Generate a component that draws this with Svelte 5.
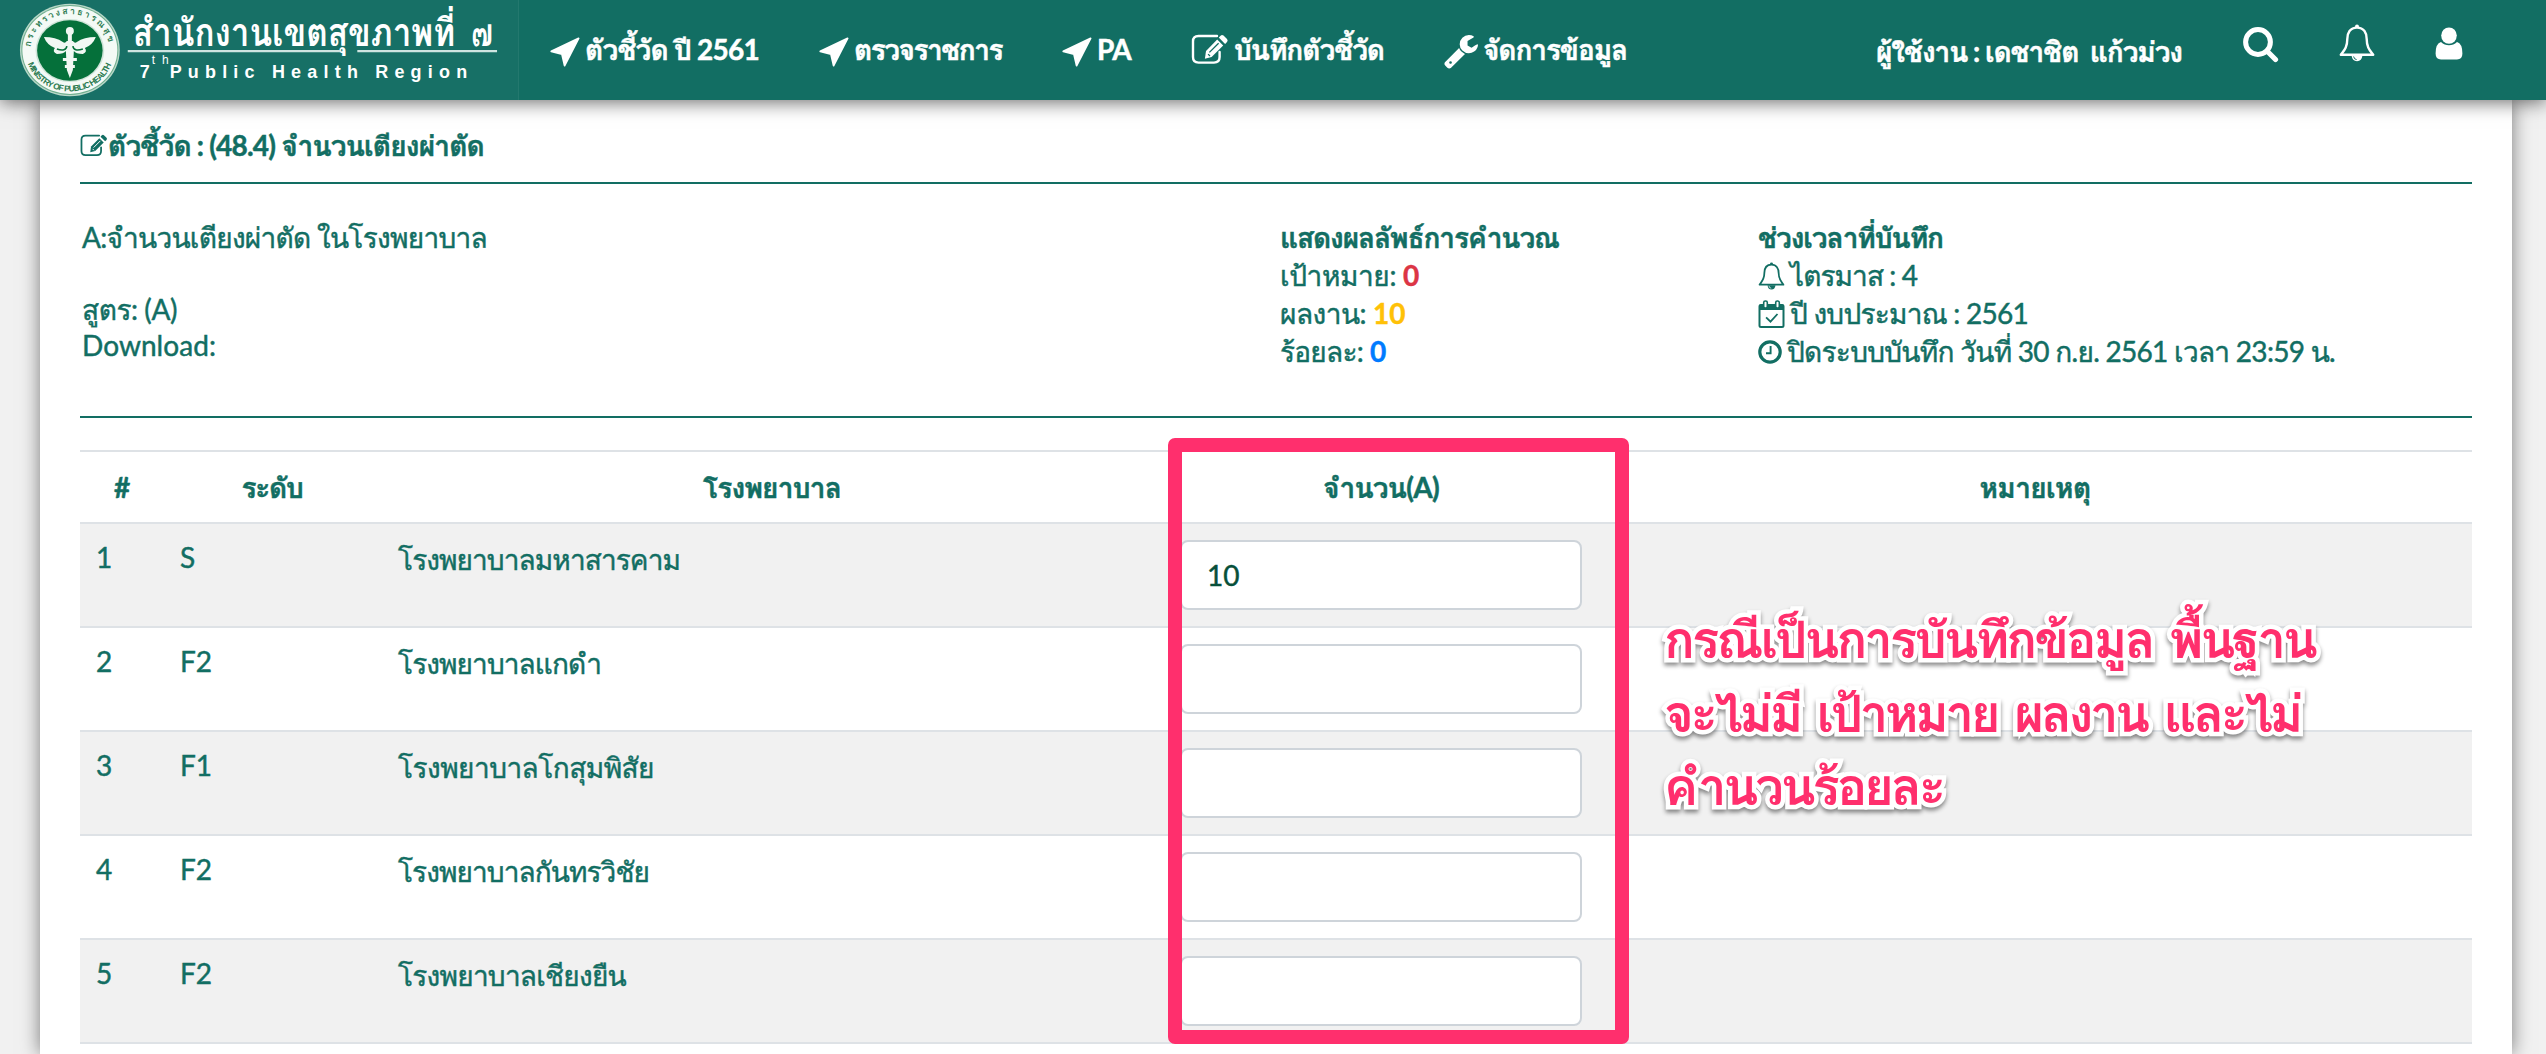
<script>
  const menu = [
    { icon: 'arrow', label: 'ตัวชี้วัด ปี 2561', w: 174 },
    { icon: 'arrow', label: 'ตรวจราชการ', w: 148 },
    { icon: 'arrow', label: 'PA', w: 34 },
    { icon: 'edit', label: 'บันทึกตัวชี้วัด', w: 150 },
    { icon: 'wrench', label: 'จัดการข้อมูล', w: 144 },
  ];

  const results = [
    { label: 'เป้าหมาย:', w: 116, value: '0', tone: 'danger' },
    { label: 'ผลงาน:', w: 86, value: '10', tone: 'warning' },
    { label: 'ร้อยละ:', w: 83, value: '0', tone: 'primary' },
  ];

  const period = [
    { icon: 'bell', label: 'ไตรมาส : 4', w: 127 },
    { icon: 'calendar', label: 'ปี งบประมาณ : 2561', w: 238 },
    { icon: 'clock', label: 'ปิดระบบบันทึก วันที่ 30 ก.ย. 2561 เวลา 23:59 น.', w: 548 },
  ];

  const rows = [
    { level: 'S', name: 'โรงพยาบาลมหาสารคาม', w: 282, value: '10' },
    { level: 'F2', name: 'โรงพยาบาลแกดำ', w: 203, value: '' },
    { level: 'F1', name: 'โรงพยาบาลโกสุมพิสัย', w: 256, value: '' },
    { level: 'F2', name: 'โรงพยาบาลกันทรวิชัย', w: 251, value: '' },
    { level: 'F2', name: 'โรงพยาบาลเชียงยืน', w: 228, value: '' },
  ];

  const note = [
    { text: 'กรณีเป็นการบันทึกข้อมูล พื้นฐาน', w: 651 },
    { text: 'จะไม่มี เป้าหมาย ผลงาน และไม่', w: 636 },
    { text: 'คำนวนร้อยละ', w: 279 },
  ];

  // Tracks the text so that it fills the given width.
  function fit(node, width) {
    node.style.letterSpacing = '0px';
    const base = node.getBoundingClientRect().width;
    node.style.letterSpacing = '1px';
    const step = node.getBoundingClientRect().width - base;
    node.style.letterSpacing = step > 0 ? `${(width - base) / step}px` : '0px';
  }
</script>

{#snippet icon(name)}
  {#if name === 'arrow'}
    <svg class="i-arrow" viewBox="0 0 30 30"><path d="M1.3 14.4 28.6 1.4 14.6 28.6 12 17.2Z" fill="currentColor" stroke="currentColor" stroke-width="1.8" stroke-linejoin="round" /></svg>
  {:else if name === 'edit'}
    <svg class="i-edit" viewBox="0 0 38 31">
      <path d="M26 2H7.5Q2 2 2 7.5V23Q2 28.6 7.5 28.6H23Q28.6 28.6 28.6 23V18" fill="none" stroke="currentColor" stroke-width="2.4" stroke-linecap="round" />
      <path d="M29.6 1.7Q31 .4 32.5 1.6L36 5Q37.3 6.5 36 8L34.1 9.9 27.8 3.6Z" fill="currentColor" />
      <path d="M26.2 5.6 32.2 11.5 20.6 23 13.9 24.8 15 17Z" fill="currentColor" />
      <path d="M27.6 9.2 18.4 18.4M17.1 20.1 19 22" stroke="var(--icon-bg)" stroke-width="1.3" fill="none" />
    </svg>
  {:else if name === 'wrench'}
    <svg class="i-wrench" viewBox="64 128 1664 1664"><path fill="currentColor" d="M448 1472q0-26-19-45t-45-19-45 19-19 45 19 45 45 19 45-19 19-45zm644-420l-682 682q-37 37-90 37-52 0-91-37l-106-108q-38-36-38-90 0-53 38-91l681-681q39 98 114.5 173.5t173.5 114.5zm634-435q0 39-23 106-47 134-164.5 217.5t-258.5 83.5q-185 0-316.5-131.5t-131.5-316.5 131.5-316.5 316.5-131.5q58 0 121.5 16.5t107.5 46.5q16 11 16 28t-16 28l-293 169v224l193 107q5-3 79-48.5t135.5-81 70.5-35.5q15 0 23.5 10t8.5 25z" /></svg>
  {:else if name === 'bell'}
    <svg class="i-bell" viewBox="0 0 36 38">
      <path d="M18 3.6C11 3.6 8.3 9 8.3 15 8.3 23.5 5 26.4 1.8 30.8H34.2C31 26.4 27.7 23.5 27.7 15 27.7 9 25 3.6 18 3.6Z" fill="none" stroke="currentColor" stroke-width="2.4" stroke-linejoin="round" />
      <path d="M16 4V2.4Q16 .6 18 .6T20 2.4V4Z" fill="currentColor" />
      <path d="M12.6 31.5H23.4Q22.8 37.2 18 37.2T12.6 31.5Z" fill="currentColor" />
      <path d="M14.6 32.5Q15 35.3 17.6 35.6" fill="none" stroke="var(--icon-bg)" stroke-width="1" />
    </svg>
  {:else if name === 'calendar'}
    <svg class="i-cal" viewBox="0 0 26 28">
      <rect x="1" y="5" width="24" height="22" rx="1.5" fill="none" stroke="currentColor" stroke-width="2" />
      <path d="M1 4.5H25V10H1Z" fill="currentColor" />
      <rect x="5.2" y="1" width="3.6" height="7" rx="1.6" fill="var(--icon-bg)" stroke="currentColor" stroke-width="1.6" />
      <rect x="17.2" y="1" width="3.6" height="7" rx="1.6" fill="var(--icon-bg)" stroke="currentColor" stroke-width="1.6" />
      <path d="M7.6 17.3 12 21.7 19 14" fill="none" stroke="currentColor" stroke-width="1.8" />
    </svg>
  {:else if name === 'clock'}
    <svg class="i-clock" viewBox="0 0 24 24">
      <circle cx="12" cy="12" r="10.2" fill="none" stroke="currentColor" stroke-width="3.2" />
      <path d="M12.6 6V13.2H8" fill="none" stroke="currentColor" stroke-width="1.9" />
    </svg>
  {:else if name === 'search'}
    <svg class="i-search" viewBox="0 0 36 36">
      <circle cx="15" cy="15" r="12.4" fill="none" stroke="currentColor" stroke-width="5" />
      <path d="M24 24 32.5 32.5" stroke="currentColor" stroke-width="5.2" stroke-linecap="round" />
    </svg>
  {:else if name === 'user'}
    <svg class="i-user" viewBox="0 0 28 33">
      <ellipse cx="14" cy="8.6" rx="7.8" ry="8.2" fill="currentColor" />
      <path d="M6 15Q9.5 18.3 14 18.3T22 15Q27.4 16.5 27.4 26.5 27.4 32.4 22 32.4H6Q.6 32.4 .6 26.5.6 16.5 6 15Z" fill="currentColor" />
    </svg>
  {/if}
{/snippet}

<div class="page">
  <header>
    <svg class="brand" viewBox="0 0 519 100" role="img" aria-label="7th Public Health Region">
      <defs>
        <path id="arc-top" d="M30.5 50A39.5 36 0 0 1 109.5 50" />
        <path id="arc-bottom" d="M25.5 50A44.5 41.5 0 0 0 114.5 50" />
      </defs>
      <ellipse cx="70" cy="50" rx="50" ry="46.4" fill="#b9d8c9" />
      <ellipse cx="70" cy="50" rx="48.6" ry="45" fill="#6fae8e" />
      <ellipse cx="70" cy="50" rx="47.6" ry="44" fill="#f4faf6" />
      <ellipse cx="70" cy="50.5" rx="34.4" ry="31.6" fill="#cfe4d8" />
      <ellipse cx="70" cy="50.5" rx="32.8" ry="30.4" fill="#05703a" />
      <text class="seal th"><textPath href="#arc-top" startOffset="3" textLength="108">กระทรวงสาธารณสุข</textPath></text>
      <text class="seal"><textPath href="#arc-bottom" startOffset="14" textLength="106">MINISTRY OF PUBLIC HEALTH</textPath></text>
      <g fill="#f1f8f3">
        <path d="M44 37Q56 37 63 42 65 44 67 41H73Q75 44 77 42 84 37 96 37 93 45 85 48 88 52 83 54 76 54 74 51L73 70 70 78 67 70 66 51Q64 54 57 54 52 52 55 48 47 45 44 37Z" />
        <circle cx="70" cy="31" r="4" />
        <path d="M68 34H72V41H68ZM63 58H77V61H63ZM65 65H75V68H65Z" />
      </g>
      <path d="M57 49Q66 52 67 46M83 49Q74 52 73 46" stroke="#05703a" stroke-width="1.6" fill="none" />
      <text class="brand-th" x="133" y="45.500" textLength="323" lengthAdjust="spacingAndGlyphs">สำนักงานเขตสุขภาพที่</text>
      <text class="brand-th" x="472" y="45.500" textLength="22" lengthAdjust="spacingAndGlyphs">๗</text>
      <path d="M128 51.2H341M358 51.2H498" stroke="#cfe5e1" stroke-width="2.2" />
      <text class="brand-en" x="140" y="78">7</text>
      <text class="brand-sup" x="152" y="64" textLength="17">th</text>
      <text class="brand-en" x="170" y="78" textLength="298">Public Health Region</text>
    </svg>
    <nav>
      {#each menu as m}
        <a href="#top">{@render icon(m.icon)}<span use:fit={m.w}>{m.label}</span></a>
      {/each}
    </nav>
    <div class="account">
      <span class="who" use:fit={306}>ผู้ใช้งาน : เดชาชิต&nbsp; แก้วม่วง</span>
      <div class="tools">{@render icon('search')}{@render icon('bell')}{@render icon('user')}</div>
    </div>
  </header>

  <main>
    <h1>{@render icon('edit')}<span use:fit={376}>ตัวชี้วัด : (48.4) จำนวนเตียงผ่าตัด</span></h1>

    <section class="info">
      <div class="formula">
        <p><span use:fit={405}>A:จำนวนเตียงผ่าตัด ในโรงพยาบาล</span></p>
        <p class="gap"><span use:fit={95}>สูตร: (A)</span></p>
        <p><span use:fit={134}>Download:</span></p>
      </div>
      <div class="result">
        <p><b use:fit={279}>แสดงผลลัพธ์การคำนวณ</b></p>
        {#each results as r}
          <p><span use:fit={r.w}>{r.label}</span><b class={r.tone}>{r.value}</b></p>
        {/each}
      </div>
      <div class="period">
        <p><b use:fit={185}>ช่วงเวลาที่บันทึก</b></p>
        {#each period as p}
          <p>{@render icon(p.icon)}<span use:fit={p.w}>{p.label}</span></p>
        {/each}
      </div>
    </section>

    <div class="sheet">
      <table>
        <colgroup><col class="c1" /><col class="c2" /><col class="c3" /><col class="c4" /><col /></colgroup>
        <thead>
          <tr>
            <th>#</th>
            <th><span use:fit={61}>ระดับ</span></th>
            <th><span use:fit={138}>โรงพยาบาล</span></th>
            <th><span use:fit={116}>จำนวน(A)</span></th>
            <th><span use:fit={111}>หมายเหตุ</span></th>
          </tr>
        </thead>
        <tbody>
          {#each rows as r, i}
            <tr>
              <td class="latin">{i + 1}</td>
              <td class="latin">{r.level}</td>
              <td class="name"><span use:fit={r.w}>{r.name}</span></td>
              <td><input type="text" value={r.value} aria-label={r.name} /></td>
              <td></td>
            </tr>
          {/each}
        </tbody>
      </table>
      <div class="marker"></div>
      <div class="note">
        {#each note as n}<p><span use:fit={n.w}>{n.text}</span></p>{/each}
      </div>
    </div>
  </main>
</div>

<style>
  :global(body) { margin: 0; background: #f1f1f1; }
  .page {
    --teal: #126e63;
    --icon-bg: #fff;
    height: 1054px;
    overflow: hidden;
    font: 28px/38px Lato, Loma, sans-serif;
    color: var(--teal);
    -webkit-text-stroke: 0.45px currentColor;
  }
  .page :global(svg) { display: block; flex: none; }
  p, h1 { margin: 0; }
  span, b { white-space: nowrap; }

  header {
    --icon-bg: #126e63;
    position: relative;
    z-index: 1;
    display: flex;
    height: 100px;
    background: var(--teal);
    color: #fff;
    font-weight: 700;
    box-shadow: 0 2px 18px rgba(0, 0, 0, 0.6);
  }
  .brand { width: 519px; height: 100px; background: #177066; border-right: 1px solid #23786e; box-sizing: border-box; -webkit-text-stroke: 0; }
  .brand text { fill: #fff; }
  .brand-th { font: 700 39px Loma, sans-serif; }
  .brand-en { font: 700 18px "Liberation Sans", sans-serif; }
  .brand-sup { font: 400 12px "Liberation Sans", sans-serif; }
  .brand .seal { font: 700 8.5px "Liberation Sans", Loma, sans-serif; fill: #2b7a50; }
  .brand .th { font-size: 9px; }

  nav { display: flex; gap: 60px; padding: 30px 0 0 31px; }
  nav a { display: flex; gap: 5px; height: 38px; color: inherit; text-decoration: none; }
  nav .i-arrow { width: 30px; height: 30px; margin-top: 7px; }
  nav .i-edit { width: 38px; height: 31px; margin-top: 4px; }
  nav .i-wrench { width: 34px; height: 34px; margin-top: 5px; }
  .account { display: flex; margin-left: auto; padding-right: 83px; }
  .who { margin-top: 32px; }
  .tools { display: flex; margin-left: 61px; }
  .i-search { width: 36px; height: 36px; margin-top: 27px; }
  .tools .i-bell { width: 36px; height: 38px; margin: 24px 60px 0; }
  .i-user { width: 28px; height: 33px; margin-top: 27px; }

  main {
    height: 954px;
    margin: 0 34px 0 40px;
    padding: 26px 40px 0;
    box-sizing: border-box;
    background: #fff;
    box-shadow: 0 0 18px rgba(0, 0, 0, 0.5);
  }
  h1 {
    display: flex;
    height: 38px;
    padding-bottom: 18px;
    border-bottom: 2px solid var(--teal);
    font-size: 28px;
  }
  h1 .i-edit { width: 28px; height: 23px; margin-top: 8px; }

  .info {
    display: grid;
    grid-template-columns: 1198px 478px 1fr;
    height: 198px;
    padding: 34px 0 0 2px;
    margin-bottom: 32px;
    box-sizing: content-box;
    border-bottom: 2px solid var(--teal);
  }
  .info p { display: flex; height: 38px; }
  .formula .gap { margin-top: 34px; height: 36px; }
  .result b:last-child:not(:first-child) { margin-left: 7px; }
  .danger { color: #dc3545; }
  .warning { color: #ffc107; }
  .primary { color: #007bff; }
  .period p { gap: 5px; }
  .period .i-bell { width: 27px; height: 28px; margin-top: 6px; }
  .period .i-cal { width: 27px; height: 28px; margin-top: 6px; }
  .period .i-clock { width: 24px; height: 24px; margin-top: 8px; }

  .sheet { position: relative; }
  table { width: 100%; table-layout: fixed; border-spacing: 0; border-bottom: 2px solid #dee2e6; }
  .c1 { width: 84px; }
  .c2 { width: 216px; }
  .c3 { width: 784px; }
  .c4 { width: 434px; }
  th, td {
    box-sizing: border-box;
    padding: 16px;
    border-top: 2px solid #dee2e6;
    text-align: left;
    vertical-align: top;
  }
  th { height: 72px; text-align: center; }
  td { height: 104px; }
  td.latin { padding-top: 14px; }
  td.name { padding-left: 18px; }
  tbody tr:nth-child(odd) { background: #f1f1f1; }
  input {
    display: block;
    width: 100%;
    height: 70px;
    box-sizing: border-box;
    padding: 0 25px;
    border: 2px solid #ced4da;
    border-radius: 8px;
    background: #fff;
    color: #07503a;
    font: inherit;
  }
  .marker {
    position: absolute;
    top: -12px;
    left: 1088px;
    width: 461px;
    height: 606px;
    box-sizing: border-box;
    border: 14px solid #ff2f6d;
    border-radius: 7px;
  }
  .note {
    position: absolute;
    top: 153px;
    left: 1584px;
    color: #ff2f6d;
    font: 700 51px/73.5px Loma, sans-serif;
    word-spacing: 3px;
    -webkit-text-stroke: 9px #fff;
    paint-order: stroke fill;
    stroke-linejoin: round;
    filter: drop-shadow(0 3px 2px rgba(0, 0, 0, 0.45));
  }
</style>
